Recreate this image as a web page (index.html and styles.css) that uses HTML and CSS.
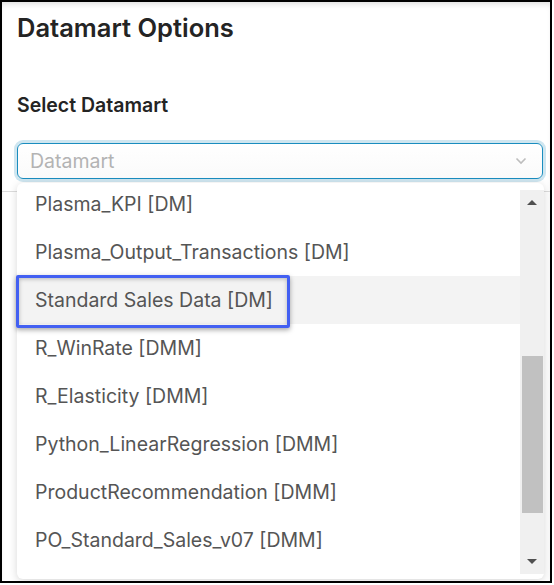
FILE: index.html
```html
<!DOCTYPE html>
<html>
<head>
<meta charset="utf-8">
<link rel="stylesheet" href="styles.css">
</head>
<body>
<div class="frame">
  <div class="modal">
    <h1 class="title">Datamart Options</h1>
    <div class="label">Select Datamart</div>
    <div class="select">
      <span class="placeholder">Datamart</span>
      <svg class="chev" width="12" height="8" viewBox="0 0 12 8"><path d="M1.5 1.5 L6 6 L10.5 1.5" fill="none" stroke="#bdbdbd" stroke-width="1.6"/></svg>
    </div>
  </div>
  <div class="rule"></div>
  <div class="dropdown">
    <ul class="list">
      <li class="item">Plasma_KPI [DM]</li>
      <li class="item">Plasma_Output_Transactions [DM]</li>
      <li class="item hover">Standard Sales Data [DM]</li>
      <li class="item">R_WinRate [DMM]</li>
      <li class="item">R_Elasticity [DMM]</li>
      <li class="item">Python_LinearRegression [DMM]</li>
      <li class="item">ProductRecommendation [DMM]</li>
      <li class="item">PO_Standard_Sales_v07 [DMM]</li>
    </ul>
    <div class="scrollbar">
      <div class="arrow up"></div>
      <div class="thumb"></div>
      <div class="arrow down"></div>
    </div>
  </div>
  <div class="callout"></div>
</div>
</body>
</html>
```
FILE: styles.css
```css
* { box-sizing: border-box; }
html, body { margin: 0; padding: 0; background: #fff; }
body { font-family: Inter, "Noto Sans", sans-serif; }

.frame {
  position: relative;
  width: 552px;
  height: 583px;
  border: 2px solid #000;
  background: #fff;
  overflow: hidden;
  box-shadow: inset 0 5px 6px -3px rgba(0,0,0,0.14);
}

.modal {
  padding: 12px 7px 0 15px;
  height: 189px;
}

.title {
  margin: 0;
  font-size: 25.5px;
  font-weight: 600;
  color: #242424;
  line-height: 28px;
}

.label {
  margin-top: 51px;
  font-size: 19.5px;
  font-weight: 600;
  color: #242424;
  line-height: 24px;
}

.select {
  margin-top: 26px;
  height: 36px;
  border: 1.5px solid #1a8dbf;
  border-radius: 6px;
  box-shadow: 0 0 0 3px #cfe6f0;
  display: flex;
  align-items: center;
  justify-content: space-between;
  padding: 0 15px 0 12px;
  background: linear-gradient(#fff, #fafafa);
}

.placeholder {
  font-size: 19.5px;
  color: #b3b3b3;
}

.chev { display: block; }

.rule {
  height: 1px;
  background: #dcdcdc;
}

.dropdown {
  position: absolute;
  left: 15px;
  top: 181px;
  width: 527px;
  height: 396px;
  background: #fff;
  border-radius: 6px;
  box-shadow: 0 2px 8px rgba(0,0,0,0.16);
  overflow: hidden;
}

.list {
  list-style: none;
  margin: -3px 24px 0 0;
  padding: 0;
}

.item {
  height: 48px;
  line-height: 48px;
  padding-left: 18px;
  font-size: 19.5px;
  color: #555;
  white-space: nowrap;
}

.item.hover { background: #f3f3f3; }

.scrollbar {
  position: absolute;
  right: 0;
  top: 7px;
  bottom: 5px;
  width: 24px;
  background: #f0f0f0;
}

.arrow {
  position: absolute;
  left: 7px;
  width: 0;
  height: 0;
  border-left: 5px solid transparent;
  border-right: 5px solid transparent;
}
.arrow.up { top: 10px; border-bottom: 5px solid #505050; }
.arrow.down { bottom: 10px; border-top: 5px solid #505050; }

.thumb {
  position: absolute;
  left: 2px;
  right: 1px;
  top: 166px;
  height: 157px;
  background: #c1c1c1;
}

.callout {
  position: absolute;
  left: 14px;
  top: 273px;
  width: 274px;
  height: 53px;
  border: 3px solid #4360f2;
  border-radius: 2px;
  box-shadow: 0 2px 5px rgba(0,0,0,0.35), inset 0 1px 4px rgba(0,0,0,0.25);
}
```
